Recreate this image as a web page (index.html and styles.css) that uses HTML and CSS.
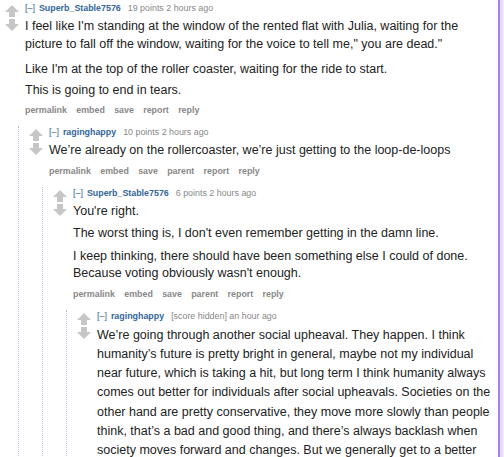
FILE: index.html
```html
<!DOCTYPE html>
<html>
<head>
	<meta charset="UTF-8">
	<meta name="viewport" content="width=device-width, initial-scale=1.0">
	<title>Comments</title>
	<link rel="stylesheet" href="styles.css">
</head>
<body>
	<div class="page">
		<div class="content">
			<div class="comment top">
				<div class="midcol">
					<svg class="arrow" viewBox="0 0 14 12"><polygon points="7,0 14,7 10,7 10,12 4,12 4,7 0,7"/></svg>
					<svg class="arrow" viewBox="0 0 14 12"><polygon points="4,0 10,0 10,5 14,5 7,12 0,5 4,5"/></svg>
				</div>
				<div class="entry">
					<p class="tagline"><a class="expand">[–]</a><a class="author">Superb_Stable7576</a><span class="score">19 points 2 hours ago</span></p>
					<div class="md first">
						<p>I feel like I'm standing at the window of the rented flat with Julia, waiting for the picture to fall off the window, waiting for the voice to tell me," you are dead."</p>
						<p>Like I'm at the top of the roller coaster, waiting for the ride to start.</p>
						<p>This is going to end in tears.</p>
					</div>
					<ul class="buttons">
						<li>permalink</li>
						<li>embed</li>
						<li>save</li>
						<li>report</li>
						<li>reply</li>
					</ul>

					<div class="child">
						<div class="comment">
							<div class="midcol">
								<svg class="arrow" viewBox="0 0 14 12"><polygon points="7,0 14,7 10,7 10,12 4,12 4,7 0,7"/></svg>
								<svg class="arrow" viewBox="0 0 14 12"><polygon points="4,0 10,0 10,5 14,5 7,12 0,5 4,5"/></svg>
							</div>
							<div class="entry">
								<p class="tagline"><a class="expand">[–]</a><a class="author">raginghappy</a><span class="score">10 points 2 hours ago</span></p>
								<div class="md">
									<p>We’re already on the rollercoaster, we’re just getting to the loop-de-loops</p>
								</div>
								<ul class="buttons">
									<li>permalink</li>
									<li>embed</li>
									<li>save</li>
									<li>parent</li>
									<li>report</li>
									<li>reply</li>
								</ul>

								<div class="child">
									<div class="comment">
										<div class="midcol">
											<svg class="arrow" viewBox="0 0 14 12"><polygon points="7,0 14,7 10,7 10,12 4,12 4,7 0,7"/></svg>
											<svg class="arrow" viewBox="0 0 14 12"><polygon points="4,0 10,0 10,5 14,5 7,12 0,5 4,5"/></svg>
										</div>
										<div class="entry">
											<p class="tagline"><a class="expand">[–]</a><a class="author">Superb_Stable7576</a><span class="score">6 points 2 hours ago</span></p>
											<div class="md">
												<p>You're right.</p>
												<p>The worst thing is, I don't even remember getting in the damn line.</p>
												<p>I keep thinking, there should have been something else I could of done. Because voting obviously wasn't enough.</p>
											</div>
											<ul class="buttons">
												<li>permalink</li>
												<li>embed</li>
												<li>save</li>
												<li>parent</li>
												<li>report</li>
												<li>reply</li>
											</ul>

											<div class="child">
												<div class="comment">
													<div class="midcol">
														<svg class="arrow" viewBox="0 0 14 12"><polygon points="7,0 14,7 10,7 10,12 4,12 4,7 0,7"/></svg>
														<svg class="arrow" viewBox="0 0 14 12"><polygon points="4,0 10,0 10,5 14,5 7,12 0,5 4,5"/></svg>
													</div>
													<div class="entry">
														<p class="tagline"><a class="expand">[–]</a><a class="author">raginghappy</a><span class="score">[score hidden] an hour ago</span></p>
														<div class="md long">
															<p>We’re going through another social upheaval. They happen. I think humanity’s future is pretty bright in general, maybe not my individual near future, which is taking a hit, but long term I think humanity always comes out better for individuals after social upheavals. Societies on the other hand are pretty conservative, they move more slowly than people think, that’s a bad and good thing, and there’s always backlash when society moves forward and changes. But we generally get to a better place for everyone, and eventually the next group pushes for their rights too.</p>
														</div>
														<ul class="buttons">
															<li>permalink</li>
															<li>embed</li>
															<li>save</li>
															<li>parent</li>
															<li>report</li>
															<li>reply</li>
														</ul>
													</div>
												</div>
											</div>
										</div>
									</div>
								</div>
							</div>
						</div>
					</div>
				</div>
			</div>
		</div>
		<div class="side"></div>
	</div>
</body>
</html>
```

FILE: styles.css
```css
body {
	margin: 0;
	padding: 0;
	background-color: #fff;
	font-family: 'Liberation Sans', Arial, sans-serif;
	color: #222;
}

.page {
	display: flex;
	min-height: 100vh;
}

.content {
	width: 495px;
	padding-right: 3px;
	border-right: 2px solid #a67ff0;
	background-color: #fff;
}

.side {
	flex: 1;
	background-color: #e7ddfb;
	border-right: 1px solid #f4f0fe;
}

.comment {
	display: flex;
	align-items: flex-start;
}

.comment.top {
	padding: 2px 0 0 5px;
}

.midcol {
	width: 14px;
	margin-right: 6px;
	padding-top: 3px;
	flex-shrink: 0;
}

.arrow {
	display: block;
	width: 14px;
	height: 12px;
	fill: #c6c6c6;
	margin-bottom: 2px;
}

.entry {
	flex: 1;
	min-width: 0;
}

.tagline {
	display: flex;
	margin: 0;
	font-size: 8.9px;
	line-height: 12px;
	color: #888;
	white-space: nowrap;
}

.expand {
	color: #369;
	margin-right: 4px;
}

.author {
	color: #369;
	font-weight: bold;
	margin-right: 7px;
}

.md {
	padding-top: 4px;
	font-size: 12.5px;
	line-height: 17.5px;
}

.md p {
	margin: 0 0 5px 0;
}

.md.first p:first-child {
	margin-bottom: 8px;
}

.md.first p:nth-child(2) {
	margin-bottom: 3px;
}

.md.long {
	line-height: 19.3px;
}

.buttons {
	display: flex;
	gap: 9.3px;
	list-style: none;
	margin: 0;
	padding: 0;
	font-size: 8.9px;
	line-height: 12px;
	font-weight: bold;
	color: #888;
}

.child {
	margin: 10px 0 0 -7px;
	padding-left: 10px;
	border-left: 1px dotted #cdb6f2;
}
```
